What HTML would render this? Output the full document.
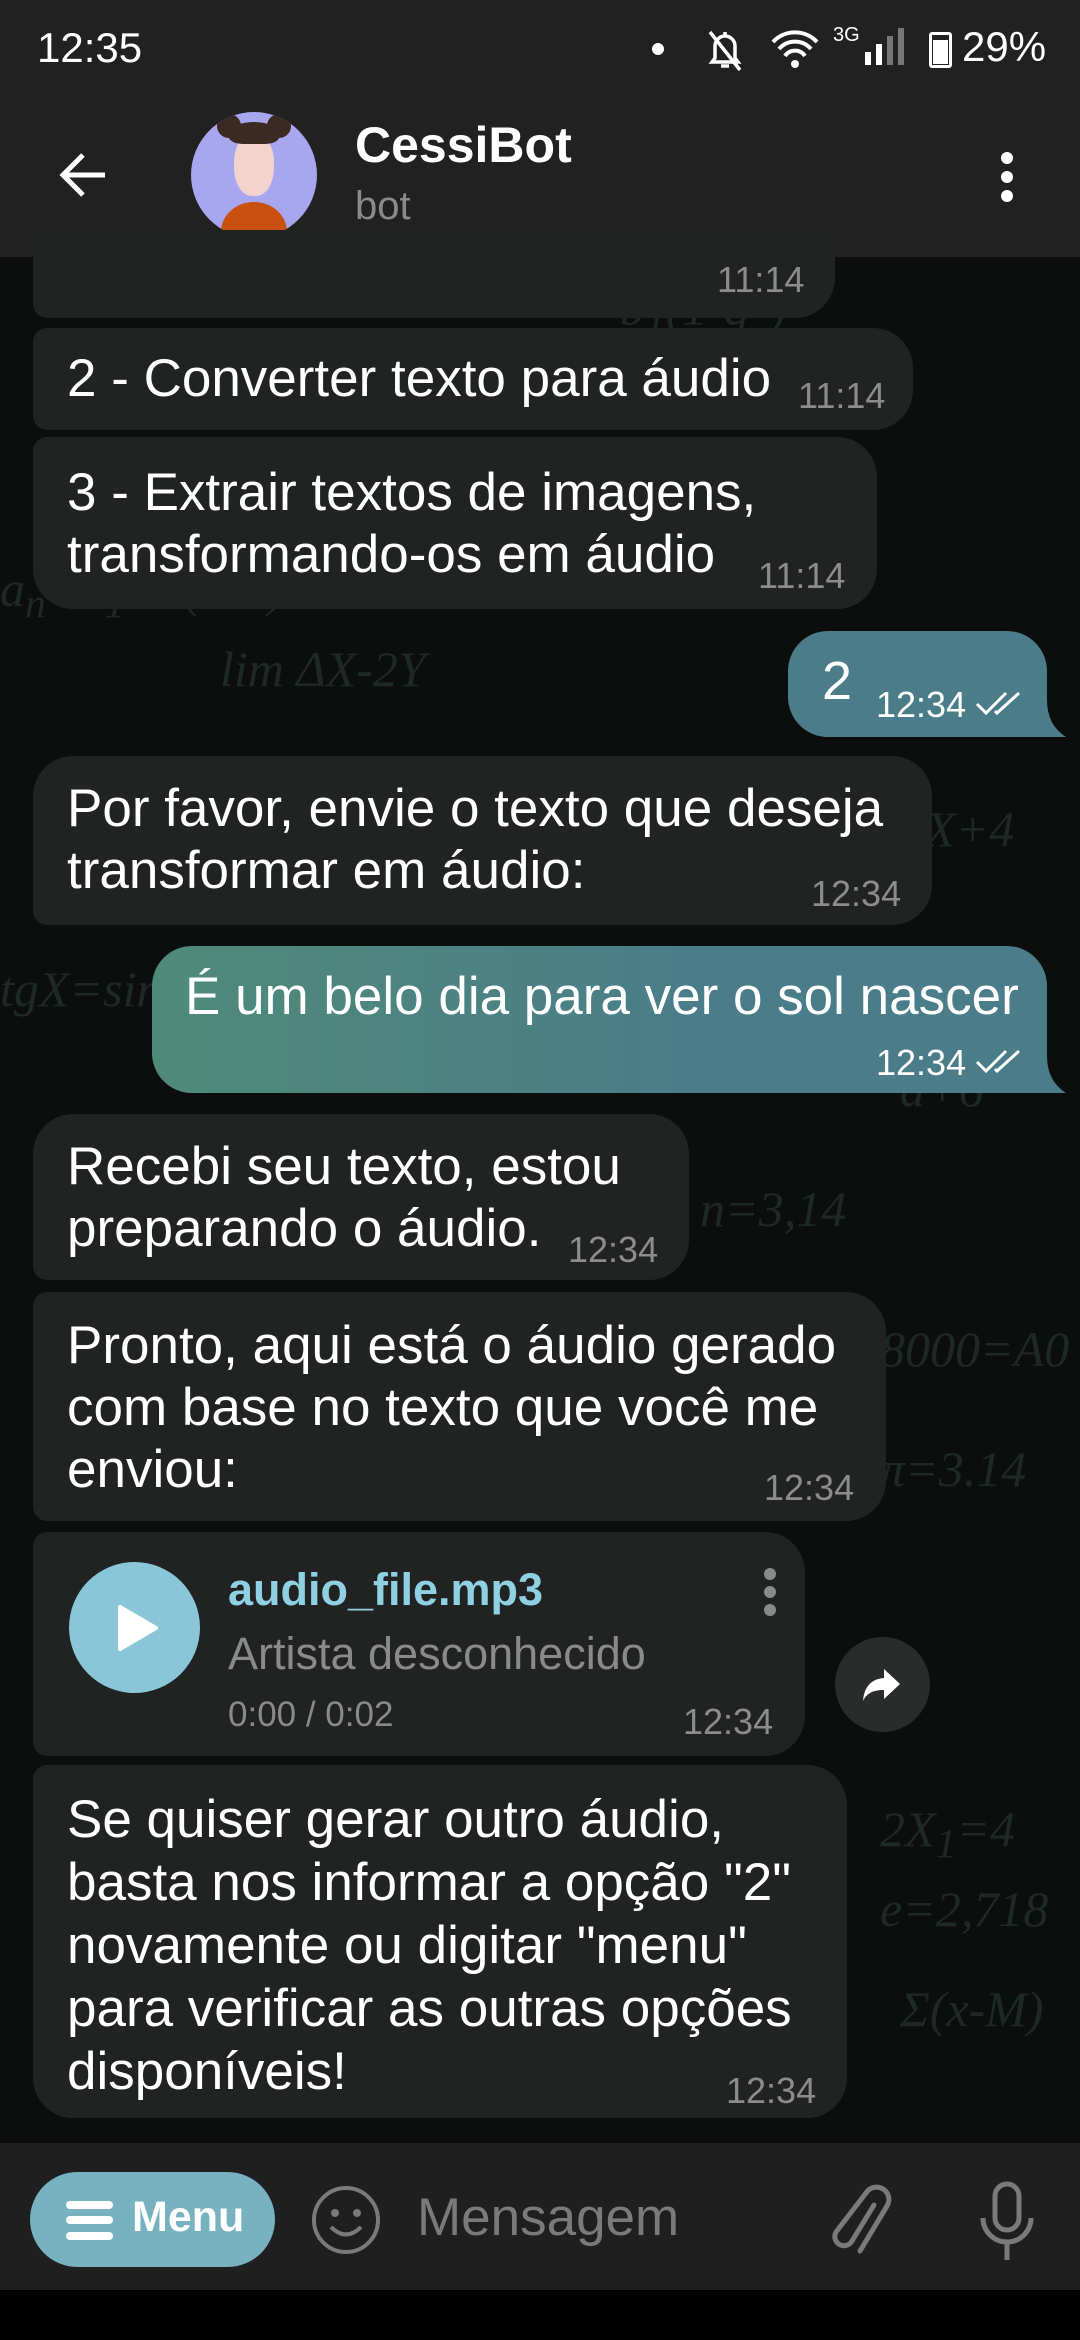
<!DOCTYPE html>
<html><head><meta charset="utf-8"><style>
*{margin:0;padding:0;box-sizing:border-box}
body{width:1080px;height:2340px;background:#0c0d0d;position:relative;overflow:hidden;font-family:"Liberation Sans",Roboto,sans-serif;color:#fff}
.a{position:absolute}
.b{position:absolute;background:#212222;border-radius:40px}
.t{position:absolute;font-size:53px;line-height:62px;white-space:nowrap;letter-spacing:0}
.tm{position:absolute;font-size:36px;color:#8c8c8c;white-space:nowrap}
.o{background:#4a7d89}
.bg{position:absolute;color:#1e2925;font-size:50px;font-family:"Liberation Serif",serif;font-style:italic;white-space:nowrap}
</style></head><body>
<div class="bg" style="left:0;top:560px">a<sub>n</sub>=a<sub>1</sub>+d(n-1)</div>
<div class="bg" style="left:220px;top:640px">lim ΔX-2Y</div>
<div class="bg" style="left:620px;top:270px">b<sub>1</sub>(1-q<sup>n</sup>)</div>
<div class="bg" style="left:900px;top:800px">2X+4</div>
<div class="bg" style="left:0;top:960px">tgX=sin/cos</div>
<div class="bg" style="left:880px;top:1320px">8000=A0</div>
<div class="bg" style="left:880px;top:1440px">π=3.14</div>
<div class="bg" style="left:880px;top:1800px">2X<sub>1</sub>=4</div>
<div class="bg" style="left:880px;top:1880px">e=2,718</div>
<div class="bg" style="left:900px;top:1980px">Σ(x-M)</div>
<div class="bg" style="left:700px;top:1180px">n=3,14</div>
<div class="bg" style="left:900px;top:1060px">a+6</div>

<div class="a" style="left:0;top:0;width:1080px;height:257px;background:#212121"></div>
<div class="a" style="left:37px;top:24px;font-size:42px">12:35</div>
<div class="a" style="left:652px;top:43px;width:12px;height:12px;border-radius:50%;background:#fff"></div>
<svg class="a" style="left:705px;top:28px" width="40" height="44" viewBox="0 0 40 44"><path d="M20 4v3M10 30V18a10 10 0 0 1 20 0v12l3 4H7z" fill="none" stroke="#fff" stroke-width="3.5"/><path d="M16 38h8" stroke="#fff" stroke-width="3.5"/><path d="M5 4l30 38" stroke="#fff" stroke-width="3.5"/></svg>
<svg class="a" style="left:770px;top:28px" width="50" height="42" viewBox="0 0 50 42"><path d="M3 14a30 30 0 0 1 44 0M9 21a21 21 0 0 1 32 0M15 28a12 12 0 0 1 20 0" fill="none" stroke="#fff" stroke-width="4"/><circle cx="25" cy="36" r="4" fill="#fff"/></svg>
<div class="a" style="left:833px;top:24px;font-size:20px">3G</div>
<div class="a" style="left:865px;top:52px;width:6px;height:13px;background:#fff"></div>
<div class="a" style="left:876px;top:44px;width:6px;height:21px;background:#fff"></div>
<div class="a" style="left:887px;top:36px;width:6px;height:29px;background:#777"></div>
<div class="a" style="left:898px;top:28px;width:6px;height:37px;background:#777"></div>
<div class="a" style="left:929px;top:32px;width:23px;height:36px;border:3px solid #fff;border-radius:3px"></div>
<div class="a" style="left:933px;top:40px;width:15px;height:24px;background:#fff"></div>
<div class="a" style="left:962px;top:23px;font-size:42px">29%</div>

<svg class="a" style="left:55px;top:150px" width="55" height="50" viewBox="0 0 55 50"><path d="M50 25H8M28 5L8 25l20 20" fill="none" stroke="#fff" stroke-width="5"/></svg>
<div class="a" style="left:191px;top:112px;width:126px;height:126px;border-radius:50%;background:#a7a6ee;overflow:hidden">
 <div class="a" style="left:30px;top:90px;width:66px;height:60px;border-radius:50% 50% 0 0;background:#c9500f"></div>
 <div class="a" style="left:43px;top:22px;width:40px;height:62px;border-radius:45%;background:#f3d4cc"></div>
 <div class="a" style="left:38px;top:10px;width:50px;height:22px;border-radius:50% 50% 30% 30%;background:#3a2a22"></div>
 <div class="a" style="left:26px;top:2px;width:24px;height:24px;border-radius:50%;background:#3a2a22"></div>
 <div class="a" style="left:76px;top:2px;width:24px;height:24px;border-radius:50%;background:#3a2a22"></div>
</div>
<div class="a" style="left:355px;top:116px;font-size:50px;font-weight:bold">CessiBot</div>
<div class="a" style="left:355px;top:184px;font-size:40px;color:#8a8a8a">bot</div>
<div class="a" style="left:1001px;top:152px;width:12px;height:12px;border-radius:50%;background:#fff"></div>
<div class="a" style="left:1001px;top:171px;width:12px;height:12px;border-radius:50%;background:#fff"></div>
<div class="a" style="left:1001px;top:190px;width:12px;height:12px;border-radius:50%;background:#fff"></div>

<div class="b" style="left:33px;top:230px;width:802px;height:88px;border-radius:0 0 40px 14px"></div>
<div class="tm" style="left:717px;top:259px">11:14</div>

<div class="b" style="left:33px;top:328px;width:880px;height:102px;border-radius:14px 40px 40px 14px"></div>
<div class="t" style="left:67px;top:348px">2 - Converter texto para áudio</div>
<div class="tm" style="left:798px;top:375px">11:14</div>

<div class="b" style="left:33px;top:437px;width:844px;height:172px;border-radius:14px 40px 40px 40px"></div>
<div class="t" style="left:67px;top:462px">3 - Extrair textos de imagens,<br>transformando-os em áudio</div>
<div class="tm" style="left:758px;top:555px">11:14</div>

<div class="b o" style="left:788px;top:631px;width:259px;height:106px;border-radius:40px 40px 6px 40px"></div>
<svg class="a" style="left:1030px;top:700px" width="36" height="37" viewBox="0 0 36 37"><path d="M0 0h17q0 25 19 37H0z" fill="#4a7d89"/></svg>
<div class="t" style="left:822px;top:650px;font-size:54px">2</div>
<div class="tm" style="left:876px;top:684px;color:#fff">12:34</div>
<svg class="a" style="left:975px;top:690px" width="52" height="26" viewBox="0 0 52 26"><path d="M2 14l9 9L31 3M20 21l2 2L44 3" fill="none" stroke="#fff" stroke-width="3"/></svg>

<div class="b" style="left:33px;top:756px;width:899px;height:169px;border-radius:40px 40px 40px 14px"></div>
<div class="t" style="left:67px;top:778px">Por favor, envie o texto que deseja<br>transformar em áudio:</div>
<div class="tm" style="left:811px;top:873px">12:34</div>

<div class="b" style="left:152px;top:946px;width:895px;height:147px;border-radius:40px 40px 6px 40px;background:linear-gradient(90deg,#4f8a78,#4a7d89 60%)"></div>
<svg class="a" style="left:1030px;top:1056px" width="36" height="37" viewBox="0 0 36 37"><path d="M0 0h17q0 25 19 37H0z" fill="#4a7d89"/></svg>
<div class="t" style="left:185px;top:966px">É um belo dia para ver o sol nascer</div>
<div class="tm" style="left:876px;top:1042px;color:#fff">12:34</div>
<svg class="a" style="left:975px;top:1048px" width="52" height="26" viewBox="0 0 52 26"><path d="M2 14l9 9L31 3M20 21l2 2L44 3" fill="none" stroke="#fff" stroke-width="3"/></svg>

<div class="b" style="left:33px;top:1114px;width:656px;height:166px;border-radius:40px 40px 40px 14px"></div>
<div class="t" style="left:67px;top:1136px">Recebi seu texto, estou<br>preparando o áudio.</div>
<div class="tm" style="left:568px;top:1229px">12:34</div>

<div class="b" style="left:33px;top:1292px;width:853px;height:229px;border-radius:14px 40px 40px 14px"></div>
<div class="t" style="left:67px;top:1315px">Pronto, aqui está o áudio gerado<br>com base no texto que você me<br>enviou:</div>
<div class="tm" style="left:764px;top:1467px">12:34</div>

<div class="b" style="left:33px;top:1532px;width:772px;height:224px;border-radius:14px 40px 40px 14px"></div>
<div class="a" style="left:69px;top:1562px;width:131px;height:131px;border-radius:50%;background:#8bc6d8"></div>
<svg class="a" style="left:116px;top:1603px" width="44" height="50" viewBox="0 0 44 50"><path d="M4 4l36 21L4 46z" fill="#fff" stroke="#fff" stroke-width="4" stroke-linejoin="round"/></svg>
<div class="a" style="left:228px;top:1564px;font-size:45px;font-weight:bold;color:#8fd0e2">audio_file.mp3</div>
<div class="a" style="left:228px;top:1628px;font-size:45px;color:#8a8a8a">Artista desconhecido</div>
<div class="a" style="left:228px;top:1695px;font-size:35px;color:#8a8a8a">0:00 / 0:02</div>
<div class="tm" style="left:683px;top:1701px">12:34</div>
<div class="a" style="left:764px;top:1568px;width:12px;height:12px;border-radius:50%;background:#8a8a8a"></div>
<div class="a" style="left:764px;top:1586px;width:12px;height:12px;border-radius:50%;background:#8a8a8a"></div>
<div class="a" style="left:764px;top:1604px;width:12px;height:12px;border-radius:50%;background:#8a8a8a"></div>
<div class="a" style="left:835px;top:1637px;width:95px;height:95px;border-radius:50%;background:#2a2b2b"></div>
<svg class="a" style="left:860px;top:1665px" width="44" height="40" viewBox="0 0 44 40"><path d="M24 4l16 15-16 15v-9C13 25 7 28 3 36 4 22 11 14 24 13z" fill="#fff"/></svg>

<div class="b" style="left:33px;top:1765px;width:814px;height:353px;border-radius:14px 40px 40px 40px"></div>
<div class="t" style="left:67px;top:1788px;line-height:63px">Se quiser gerar outro áudio,<br>basta nos informar a opção "2"<br>novamente ou digitar "menu"<br>para verificar as outras opções<br>disponíveis!</div>
<div class="tm" style="left:726px;top:2070px">12:34</div>

<div class="a" style="left:0;top:2143px;width:1080px;height:147px;background:#1f1f20"></div>
<div class="a" style="left:0;top:2290px;width:1080px;height:50px;background:#000"></div>
<div class="a" style="left:30px;top:2172px;width:245px;height:95px;border-radius:48px;background:#78b1c0"></div>
<div class="a" style="left:66px;top:2201px;width:47px;height:8px;border-radius:4px;background:#fff"></div>
<div class="a" style="left:66px;top:2216px;width:47px;height:8px;border-radius:4px;background:#fff"></div>
<div class="a" style="left:66px;top:2232px;width:47px;height:8px;border-radius:4px;background:#fff"></div>
<div class="a" style="left:132px;top:2193px;font-size:43px;font-weight:bold">Menu</div>
<svg class="a" style="left:310px;top:2184px" width="72" height="72" viewBox="0 0 72 72"><circle cx="36" cy="36" r="32" fill="none" stroke="#7a7a7a" stroke-width="4"/><circle cx="25" cy="29" r="4" fill="#7a7a7a"/><circle cx="47" cy="29" r="4" fill="#7a7a7a"/><path d="M21 43q15 15 30 0" fill="none" stroke="#7a7a7a" stroke-width="4"/></svg>
<div class="a" style="left:417px;top:2187px;font-size:53px;color:#7a7a7a">Mensagem</div>
<svg class="a" style="left:832px;top:2183px" width="62" height="75" viewBox="0 0 62 75"><path d="M42 22L20 58a9 9 0 0 1-16-9L34 10a12 12 0 0 1 21 13L28 68" fill="none" stroke="#7a7a7a" stroke-width="5" stroke-linecap="round"/></svg>
<svg class="a" style="left:978px;top:2180px" width="58" height="84" viewBox="0 0 58 84"><rect x="17" y="4" width="24" height="46" rx="12" fill="none" stroke="#7a7a7a" stroke-width="5"/><path d="M5 38a24 24 0 0 0 48 0M29 62v18" fill="none" stroke="#7a7a7a" stroke-width="5"/></svg>
</body></html>
